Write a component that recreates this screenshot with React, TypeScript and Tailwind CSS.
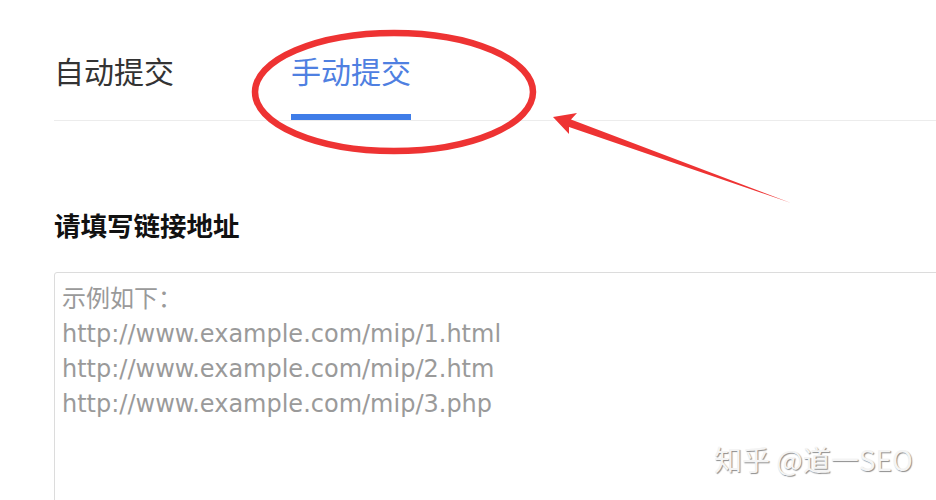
import React from 'react';

const cjk = '"Noto Sans CJK SC", "Noto Sans", sans-serif';

const tabs = [
  { label: '自动提交', active: false },
  { label: '手动提交', active: true },
];

const examples = [
  'http://www.example.com/mip/1.html',
  'http://www.example.com/mip/2.htm',
  'http://www.example.com/mip/3.php',
];

function Annotation() {
  // red hand-drawn circle + arrow laid over the tab bar
  return (
    <svg className="pointer-events-none absolute left-0 top-0" width="936" height="500" viewBox="0 0 936 500">
      <ellipse cx="394" cy="92" rx="139" ry="59" fill="none" stroke="#ee3333" strokeWidth="6.5" />
      <polygon points="553,117 577,113 571,119.5 791,203 569,127 569,134" fill="#ee3333" />
    </svg>
  );
}

export default function App() {
  return (
    <div className="relative h-[500px] w-[936px] overflow-hidden bg-white" style={{ fontFamily: cjk }}>
      <div className="pl-[54px]">
        <div className="flex gap-[117px] border-b border-[#ececec] pt-[50px]">
          {tabs.map((t) => (
            <div key={t.label} className="flex flex-col">
              <span
                className={`text-[30px] leading-[40px] ${t.active ? 'text-[#4f80e1]' : 'text-[#333]'}`}
              >
                {t.label}
              </span>
              <span className={`mt-[24px] h-[6px] ${t.active ? 'bg-[#3f7de8]' : 'bg-transparent'}`} />
            </div>
          ))}
        </div>

        <h2 className="mt-[86px] text-[26.5px] font-bold leading-[36px] text-[#111]">请填写链接地址</h2>

        <div
          className="mt-[29px] h-[260px] w-[900px] rounded-[3px] border border-[#dcdcdc] pl-[7px] pt-[9px] text-[24px] leading-[35px] text-[#9a9a9a]"
          style={{ fontFamily: '"DejaVu Sans", "Noto Sans CJK SC", sans-serif' }}
        >
          <div>示例如下：</div>
          {examples.map((u) => (
            <div key={u}>{u}</div>
          ))}
        </div>
      </div>

      <div className="absolute left-[714px] top-[439px] text-[28px] leading-[40px] text-[#f4f4f4] [text-shadow:1px_1px_1px_rgba(0,0,0,0.45)]">
        知乎 @道一SEO
      </div>

      <Annotation />
    </div>
  );
}
